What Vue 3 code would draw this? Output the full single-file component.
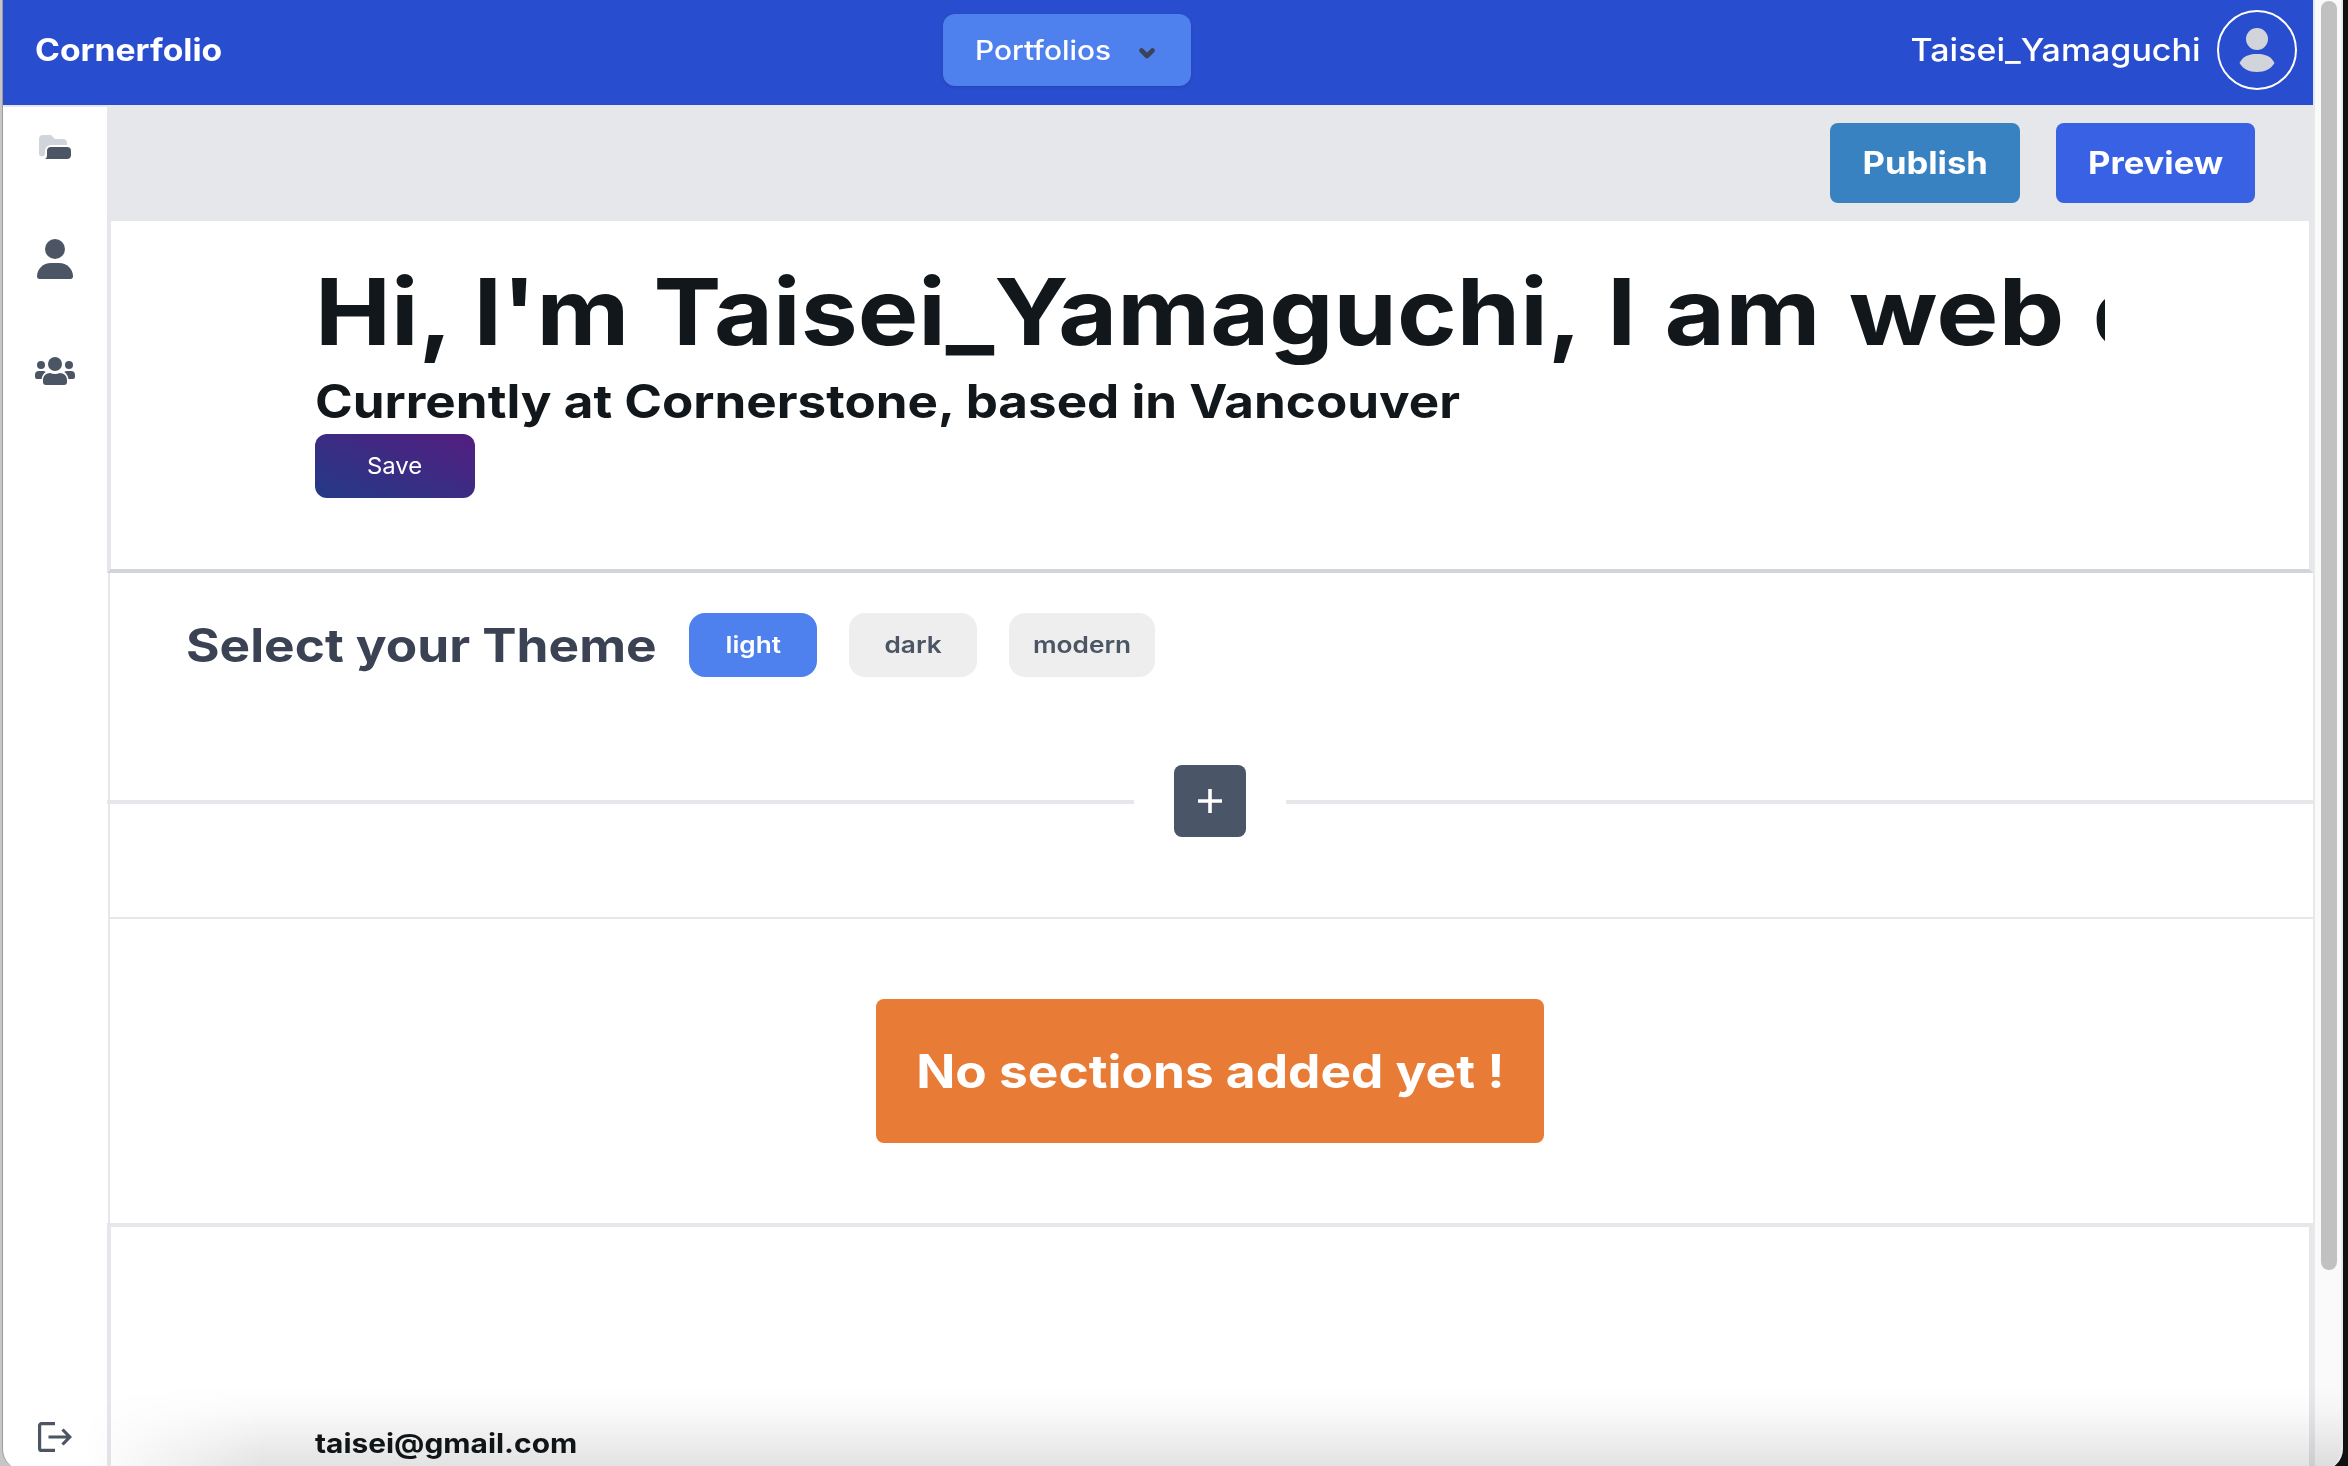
<script setup>
const themes = [
  { name: 'light', active: true },
  { name: 'dark', active: false },
  { name: 'modern', active: false },
]
</script>

<template>
  <div class="desktop">
    <div class="window">
      <div class="page">
        <header class="topbar">
          <div class="brand"><span class="wide">Cornerfolio</span></div>
          <button class="menu">
            <span class="wide">Portfolios</span>
            <svg width="16" height="11" viewBox="0 0 16 11"><path d="M2.5 2.5 8 8l5.500-5.500" fill="none" stroke="#3a4458" stroke-width="4.600" stroke-linecap="round" stroke-linejoin="round" /></svg>
          </button>
          <div class="account">
            <span class="user wide">Taisei_Yamaguchi</span>
            <svg width="80" height="80" viewBox="0 0 80 80">
              <circle cx="40" cy="40" r="39" fill="none" stroke="#fff" stroke-width="2" />
              <circle cx="40" cy="29" r="11" fill="#d1d5db" />
              <path d="M22.500 53C26 46.500 31 44 40 44s14 2.500 17.500 9C54 59 48 62 40 62s-14-3-17.500-9z" fill="#d1d5db" />
            </svg>
          </div>
        </header>

        <div class="body">
          <nav class="sidebar">
            <svg class="folder" width="32" height="24" viewBox="0 0 32 24">
              <path d="M0 4a4 4 0 0 1 4-4h8l4 4h8a4 4 0 0 1 4 4v2H12a6 6 0 0 0-6 6v2.500a3 3 0 0 1-6 0z" fill="#d1d5db" />
              <path d="M8 16a4 4 0 0 1 4-4h16a4 4 0 0 1 4 4v4a4 4 0 0 1-4 4H6c1.500-1 2-2 2-4z" fill="#4b5563" />
            </svg>
            <svg class="person" width="36" height="40" viewBox="0 0 36 40">
              <circle cx="18" cy="10" r="10" fill="#4b5563" />
              <path d="M14 24h8c8 0 14 6 14 13.500 0 1.400-1.100 2.500-2.500 2.500h-31C1.100 40 0 38.900 0 37.500 0 30 6 24 14 24z" fill="#4b5563" />
            </svg>
            <svg class="group" width="40" height="28" viewBox="0 0 40 28" fill="#4b5563">
              <circle cx="6" cy="8" r="4" />
              <circle cx="34" cy="8" r="4" />
              <circle cx="20" cy="7" r="7" />
              <path d="M4 14h4c1 0 2 .4 2.800 1C8.300 16.400 7 19 6.600 22H2a2 2 0 0 1-2-2v-2a4 4 0 0 1 4-4z" />
              <path d="M36 14h-4c-1 0-2 .4-2.800 1 2.500 1.400 3.800 4 4.200 7H38a2 2 0 0 0 2-2v-2a4 4 0 0 0-4-4z" />
              <path d="M15.200 16c1.500.7 3 1 4.800 1s3.300-.3 4.800-1C29 16 32 19 32 23.200V25a3 3 0 0 1-3 3H11a3 3 0 0 1-3-3v-1.800C8 19 11 16 15.200 16z" />
            </svg>
            <svg class="logout" width="34" height="30" viewBox="0 0 34 30" fill="none" stroke="#4b5563" stroke-width="3.200">
              <path d="M17 1.600H3.600a2 2 0 0 0-2 2v22.800a2 2 0 0 0 2 2H17" />
              <path d="M10.500 15H32M24.500 7.500l7.300 7.500-7.300 7.500" />
            </svg>
          </nav>

          <main class="main">
            <div class="toolbar">
              <button class="action publish"><span class="wide">Publish</span></button>
              <button class="action preview"><span class="wide">Preview</span></button>
            </div>

            <section class="hero">
              <h1>
                <span class="wide greeting">Hi, I'm Taisei_Yamaguchi,</span>
                <span class="wide role">I am web developer</span>
              </h1>
              <h2><span class="wide">Currently at Cornerstone, based in Vancouver</span></h2>
              <button class="save"><span class="wide">Save</span></button>
            </section>

            <section class="builder">
              <div class="themes">
                <h3><span class="wide">Select your Theme</span></h3>
                <button v-for="t in themes" :key="t.name" class="theme" :class="[t.name, { active: t.active }]">
                  <span class="wide">{{ t.name }}</span>
                </button>
              </div>
              <div class="adder">
                <i class="rule"></i>
                <button class="add">
                  <svg width="24" height="24" viewBox="0 0 24 24"><path d="M12 0v24M0 12h24" stroke="#fff" stroke-width="3.600" /></svg>
                </button>
                <i class="rule"></i>
              </div>
              <div class="empty">
                <p class="notice"><span class="wide">No sections added yet !</span></p>
              </div>
            </section>

            <footer class="contact">
              <p><span class="wide">taisei@gmail.com</span></p>
            </footer>
          </main>
        </div>
      </div>
      <div class="scrollbar"><div class="thumb"></div></div>
      <div class="fade"></div>
    </div>
  </div>
</template>

<style>
body { margin: 0; overflow: hidden; }
</style>

<style scoped>
* { box-sizing: border-box; }
h1, h2, h3, p { margin: 0; white-space: nowrap; }
button { border: 0; padding: 0; font: inherit; color: #fff; white-space: nowrap; }
svg { display: block; flex: none; }

/* Extended letterforms: each text sets its own --stretch */
.wide {
  display: inline-block;
  transform: scaleX(var(--stretch, 1.113));
  transform-origin: var(--from, left) center;
}

.desktop {
  width: 2348px;
  height: 1466px;
  overflow: hidden;
  padding-left: 2px;
  background: linear-gradient(90deg, #c6c6c6 0 50%, #111 50%);
  font-family: Inter, "Open Sans", sans-serif;
}
.window {
  position: relative;
  display: flex;
  width: 2341px;
  height: 1470px;
  overflow: hidden;
  border-left: 1px solid #9b9b9b;
  border-right: 2px solid #e9e9e9;
  border-radius: 0 0 21px 21px;
  background: #fff;
}
.page { width: 2310px; display: flex; flex-direction: column; }

.topbar {
  display: flex;
  align-items: center;
  height: 105px;
  background: #294dcf;
  color: #fff;
}
.brand {
  --stretch: 1.087;
  width: 940px;
  height: 40px;
  margin-top: -5px;
  padding-left: 32px;
  font-size: 31px;
  line-height: 40px;
  font-weight: 700;
}
.menu {
  --stretch: 1.105;
  display: flex;
  align-items: center;
  width: 248px;
  height: 72px;
  margin-top: -5px;
  padding: 0 36px 0 32px;
  justify-content: space-between;
  border-radius: 12px;
  background: #4f81ee;
  box-shadow: 0 1px 3px rgba(0, 0, 0, .15);
  font-size: 27px;
  font-weight: 500;
}
.menu svg { margin-top: 6px; }
.account { --stretch: 1.096; --from: right; display: flex; align-items: center; gap: 17px; margin: -5px 16px 0 auto; }
.user { font-size: 31px; line-height: 40px; font-weight: 500; }

.body { display: flex; flex: 1; }
.sidebar {
  display: flex;
  flex-direction: column;
  align-items: center;
  width: 104px;
  border-top: 2px solid #e5e7eb;
}
.folder { margin-top: 28px; }
.person { margin-top: 80px; }
.group { margin-top: 78px; }
.logout { margin: auto 0 18px; }

.main { display: flex; flex-direction: column; width: 2206px; }
.toolbar {
  display: flex;
  justify-content: flex-end;
  align-items: center;
  gap: 36px;
  height: 116px;
  padding-right: 58px;
  background: #e5e7eb;
}
.action { --from: center; --stretch: 1.116; height: 80px; padding-bottom: 2px; border-radius: 8px; font-size: 31px; font-weight: 700; }
.publish { width: 190px; background: #3982c1; }
.preview { width: 199px; background: #3861e3; }

.hero {
  display: flex;
  flex-direction: column;
  align-items: flex-start;
  height: 352px;
  padding: 42px 204px 0;
  border: 4px solid #e5e7eb;
  border-top: 0;
  border-bottom-color: #d1d5db;
  color: #12171b;
}
h1 { display: flex; width: 1790px; height: 110px; overflow: hidden; font-size: 92.500px; line-height: 96px; font-weight: 700; }
h1 .wide { flex: none; height: 110px; }
.greeting { --stretch: 1.1; }
.role { --stretch: 1.13; margin-left: 140px; word-spacing: 3px; }
h2 { --stretch: 1.111; height: 61px; font-size: 46px; line-height: 56px; font-weight: 700; }
.save {
  --from: center;
  --stretch: 1.04;
  width: 160px;
  height: 64px;
  border-radius: 12px;
  background: linear-gradient(to top right, #233a87, #541e80);
  font-size: 23px;
}

.builder {
  display: flex;
  flex-direction: column;
  width: 2207px;
  height: 650px;
  margin-left: 1px;
  border-left: 2px solid #e5e7eb;
}
.themes { display: flex; align-items: center; height: 144px; padding-left: 76px; }
h3 { --stretch: 1.116; width: 503px; margin-top: -1px; font-size: 46px; line-height: 56px; font-weight: 700; color: #3a4253; }
.theme {
  --from: center;
  --stretch: 1.14;
  width: 128px;
  height: 64px;
  margin-right: 32px;
  padding-bottom: 1px;
  border-radius: 16px;
  background: #eee;
  color: #4b5563;
  font-size: 23px;
  font-weight: 600;
}
.theme.modern { width: 146px; }
.theme.active { background: #4f81ee; color: #fff; }

.adder {
  display: flex;
  align-items: center;
  gap: 40px;
  height: 200px;
  margin: 0 2px 0 -3px;
  padding-bottom: 32px;
}
.rule { flex: 1; height: 4px; margin-top: 2px; background: #e5e7eb; }
.add {
  display: grid;
  place-items: center;
  width: 72px;
  height: 72px;
  border-radius: 8px;
  background: #4a5567;
}
.empty { display: flex; justify-content: center; flex: 1; padding: 80px 5px 0 0; border-top: 2px solid #e5e7eb; }
.notice {
  --from: center;
  --stretch: 1.117;
  width: 668px;
  height: 144px;
  border-radius: 8px;
  background: #e87b35;
  color: #fff;
  font-size: 46px;
  line-height: 144px;
  font-weight: 700;
  text-align: center;
}
.contact {
  --stretch: 1.106;
  flex: 1;
  padding: 197px 204px 0;
  border: 4px solid #e5e7eb;
  border-bottom: 0;
  color: #12171b;
}
.contact p { font-size: 27px; line-height: 40px; font-weight: 700; }

.scrollbar { flex: 1; padding: 1px 4px 0 6px; border-left: 2px solid #e8e8e8; background: #fafafa; }
.thumb { width: 16px; height: 1269px; border-radius: 8px; background: #c1c1c1; }
.fade {
  position: absolute;
  left: 0;
  right: 0;
  bottom: 0;
  height: 84px;
  background: linear-gradient(rgba(0, 0, 0, 0), rgba(0, 0, 0, .02) 30%, rgba(0, 0, 0, .118));
  -webkit-mask-image: linear-gradient(90deg, transparent 80px, #000 260px);
  mask-image: linear-gradient(90deg, transparent 80px, #000 260px);
  pointer-events: none;
}
</style>
